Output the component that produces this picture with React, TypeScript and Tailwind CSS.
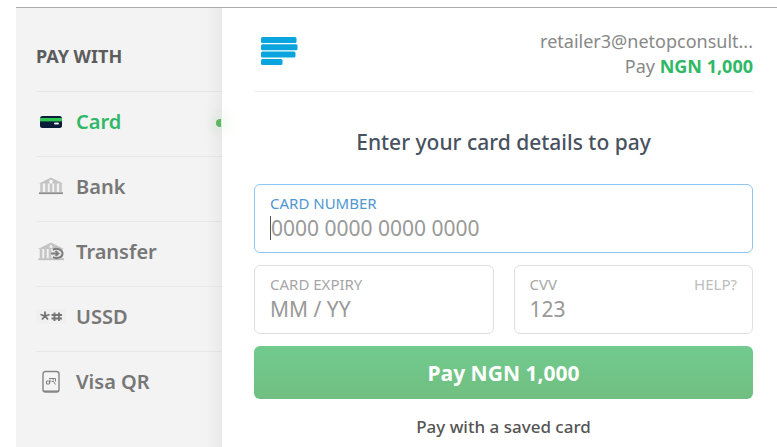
import { useState } from "react";
import type { ReactNode } from "react";

interface Method {
  id: string;
  label: string;
  icon: ReactNode;
}

const CardIcon = () => (
  <svg width="30" height="24" viewBox="0 0 30 24" aria-hidden="true">
    <rect x="4" y="6" width="22" height="12" rx="2.5" fill="#0b1c38" />
    <rect x="4" y="8" width="22" height="3.4" fill="#2fc653" />
    <rect x="18" y="12.6" width="5" height="2" rx="1" fill="#e8edf2" />
  </svg>
);

const BankIcon = () => (
  <svg width="30" height="24" viewBox="0 0 30 24" aria-hidden="true">
    <path d="M3 8.5 15 2.5 27 8.5Z" fill="#c3c3c3" />
    <circle cx="15" cy="6.6" r="1.8" fill="#f6f6f6" />
    <path d="M5.5 8V17M10.5 8V17M15 9V17M19.5 8V17M24.5 8V17" stroke="#c6c6c6" strokeWidth="2.6" />
    <path d="M3 18.2H27" stroke="#8c8c8c" strokeWidth="1.8" />
  </svg>
);

const TransferIcon = () => (
  <svg width="30" height="24" viewBox="0 0 30 24" aria-hidden="true">
    <path d="M2 9 15 2.5 28 9Z" fill="#c3c3c3" />
    <circle cx="15" cy="6.6" r="1.6" fill="#eeeeee" />
    <path d="M5 8V19M9.5 8V19M14 8V19M25 8V19" stroke="#c6c6c6" strokeWidth="2.6" />
    <path d="M2.5 19.2H28" stroke="#c3c3c3" strokeWidth="2" />
    <ellipse cx="21.5" cy="13.5" rx="6" ry="5.2" fill="#e6e6e6" />
    <path d="M17 10C19.5 8 26.5 8.6 26.5 13.5S19.5 19 17 17" fill="none" stroke="#7d7d7d" strokeWidth="2" />
    <path d="M15 13.5H22.5M19.5 10.8 22.5 13.5 19.5 16.2" fill="none" stroke="#7d7d7d" strokeWidth="1.8" />
  </svg>
);

const UssdIcon = () => (
  <svg width="30" height="24" viewBox="0 0 30 24" aria-hidden="true">
    <rect x="0" y="4" width="30" height="15" fill="#f0f0f0" />
    <path d="M9 6.5V11M4.5 9.5 9 11 13.5 9.5M9 11 6 14.5M9 11 12 14.5" fill="none" stroke="#747474" strokeWidth="1.8" />
    <path d="M18.5 7.5V16M23 7.5V16M15.5 10H26M15.5 13.5H26" stroke="#747474" strokeWidth="1.9" />
  </svg>
);

const QrIcon = () => (
  <svg width="30" height="24" viewBox="0 0 30 24" aria-hidden="true">
    <rect x="7" y="1.5" width="16" height="20.5" rx="2.5" fill="#f4f4f4" stroke="#858585" strokeWidth="1.4" />
    <path d="M8 21.2H22" stroke="#858585" strokeWidth="1.5" />
    <path d="M13 8.5H19.5V11.5M10.5 11H13.5V14H10.5ZM14 12.5V9.5M15.5 11.5H17.5L19.5 14.5M16.5 9.8H18" fill="none" stroke="#808080" strokeWidth="1" />
  </svg>
);

const methods: Method[] = [
  { id: "card", label: "Card", icon: <CardIcon /> },
  { id: "bank", label: "Bank", icon: <BankIcon /> },
  { id: "transfer", label: "Transfer", icon: <TransferIcon /> },
  { id: "ussd", label: "USSD", icon: <UssdIcon /> },
  { id: "qr", label: "Visa QR", icon: <QrIcon /> },
];

const Logo = () => (
  <svg width="38" height="30" viewBox="0 0 38 30" role="img" aria-label="Paystack">
    <g fill="#0aa5de">
      <rect x="0" y="1" width="35.5" height="6" rx="1.5" />
      <rect x="0" y="8.3" width="36.5" height="6" rx="1.5" />
      <rect x="0" y="15.6" width="34.5" height="6" rx="1.5" />
      <rect x="0" y="23" width="21.5" height="6" rx="1.5" />
    </g>
  </svg>
);

export default function App() {
  const [active, setActive] = useState("card");
  const [cardNumber, setCardNumber] = useState("");

  return (
    <div className="min-h-screen bg-white pl-4 pt-[7px] font-['Noto_Sans','Open_Sans',sans-serif]">
      <div className="flex min-h-[440px] border-t border-[#ababab]">
        <aside className="relative w-[206px] shrink-0 bg-[#f3f3f3] pl-5">
          <h2 className="flex h-21 items-center border-b border-[#e6e6e6] pt-3 text-lg font-bold text-[#5c5c5c]">
            PAY WITH
          </h2>
          <nav>
            {methods.map((method) => (
              <button
                key={method.id}
                type="button"
                onClick={() => setActive(method.id)}
                className={`flex h-[65px] w-full items-center gap-2.5 border-b border-[#e8e8e8] pb-1 text-left text-xl font-semibold last:border-b-0 last:pb-1.5 ${
                  active === method.id ? "text-[#2fb866]" : "text-[#777777]"
                }`}
              >
                {method.icon}
                {method.label}
              </button>
            ))}
          </nav>
          <div className="absolute inset-y-0 right-0 w-4 bg-linear-to-r from-transparent to-black/4" />
          {/* active marker */}
          <span className="absolute right-px top-[111px] h-2 w-[5px] rounded-l-full bg-[#5cb860] shadow-[0_0_14px_4px_rgba(92,184,96,0.14)]" />
        </aside>

        <main className="min-w-0 flex-1 pl-8 pr-6">
          <header className="flex h-21 items-center justify-between border-b border-[#ededed] pt-2 pl-[7px]">
            <div className="pb-1.5">
              <Logo />
            </div>
            <div className="text-right text-lg leading-[25px] text-[#888888]">
              <p>retailer3@netopconsult...</p>
              <p>
                Pay <strong className="font-bold text-[#2fb866]">NGN 1,000</strong>
              </p>
            </div>
          </header>

          <form className="pt-9" onSubmit={(e) => e.preventDefault()}>
            <h1 className="text-center text-[21px] leading-7 font-medium text-[#48525f]">
              Enter your card details to pay
            </h1>

            <div className="mt-7 flex h-[69px] flex-col rounded-md border border-[#8cc6f6] px-[15px] pt-2">
              <label htmlFor="number" className="text-[15px] leading-5 text-[#4f97cf]">
                CARD NUMBER
              </label>
              <div className="flex h-[30px] items-center">
                {cardNumber === "" && <span className="h-6 w-px shrink-0 bg-[#555555]" />}
                <input
                  id="number"
                  value={cardNumber}
                  onChange={(e) => setCardNumber(e.target.value)}
                  placeholder="0000 0000 0000 0000"
                  className="w-full min-w-0 bg-transparent text-[21px] leading-7 text-[#555555] outline-none placeholder:text-[#999999]"
                />
              </div>
            </div>

            <div className="mt-3 grid grid-cols-2 gap-5">
              <div className="h-[69px] rounded-md border border-[#dfdfdf] px-[15px] pt-2">
                <label htmlFor="expiry" className="block text-[15px] leading-5 text-[#a6a6a6]">
                  CARD EXPIRY
                </label>
                <input
                  id="expiry"
                  placeholder="MM / YY"
                  className="h-[30px] w-full text-[21px] leading-7 text-[#555555] outline-none placeholder:text-[#999999]"
                />
              </div>
              <div className="h-[69px] rounded-md border border-[#dfdfdf] px-[15px] pt-2">
                <div className="flex justify-between text-[15px] leading-5">
                  <label htmlFor="cvv" className="text-[#a6a6a6]">
                    CVV
                  </label>
                  <button type="button" className="text-[#bdbdbd]">
                    HELP?
                  </button>
                </div>
                <input
                  id="cvv"
                  placeholder="123"
                  className="h-[30px] w-full text-[21px] leading-7 text-[#555555] outline-none placeholder:text-[#999999]"
                />
              </div>
            </div>

            <button
              type="submit"
              className="mt-3 h-[53px] w-full rounded-md bg-linear-to-b from-[#72ca8f] to-[#70bf80] text-[21px] leading-7 font-bold text-white"
            >
              Pay NGN 1,000
            </button>
            <a href="#saved" className="mt-4 block text-center text-[17px] leading-6 font-medium text-[#555555]">
              Pay with a saved card
            </a>
          </form>
        </main>
      </div>
    </div>
  );
}
